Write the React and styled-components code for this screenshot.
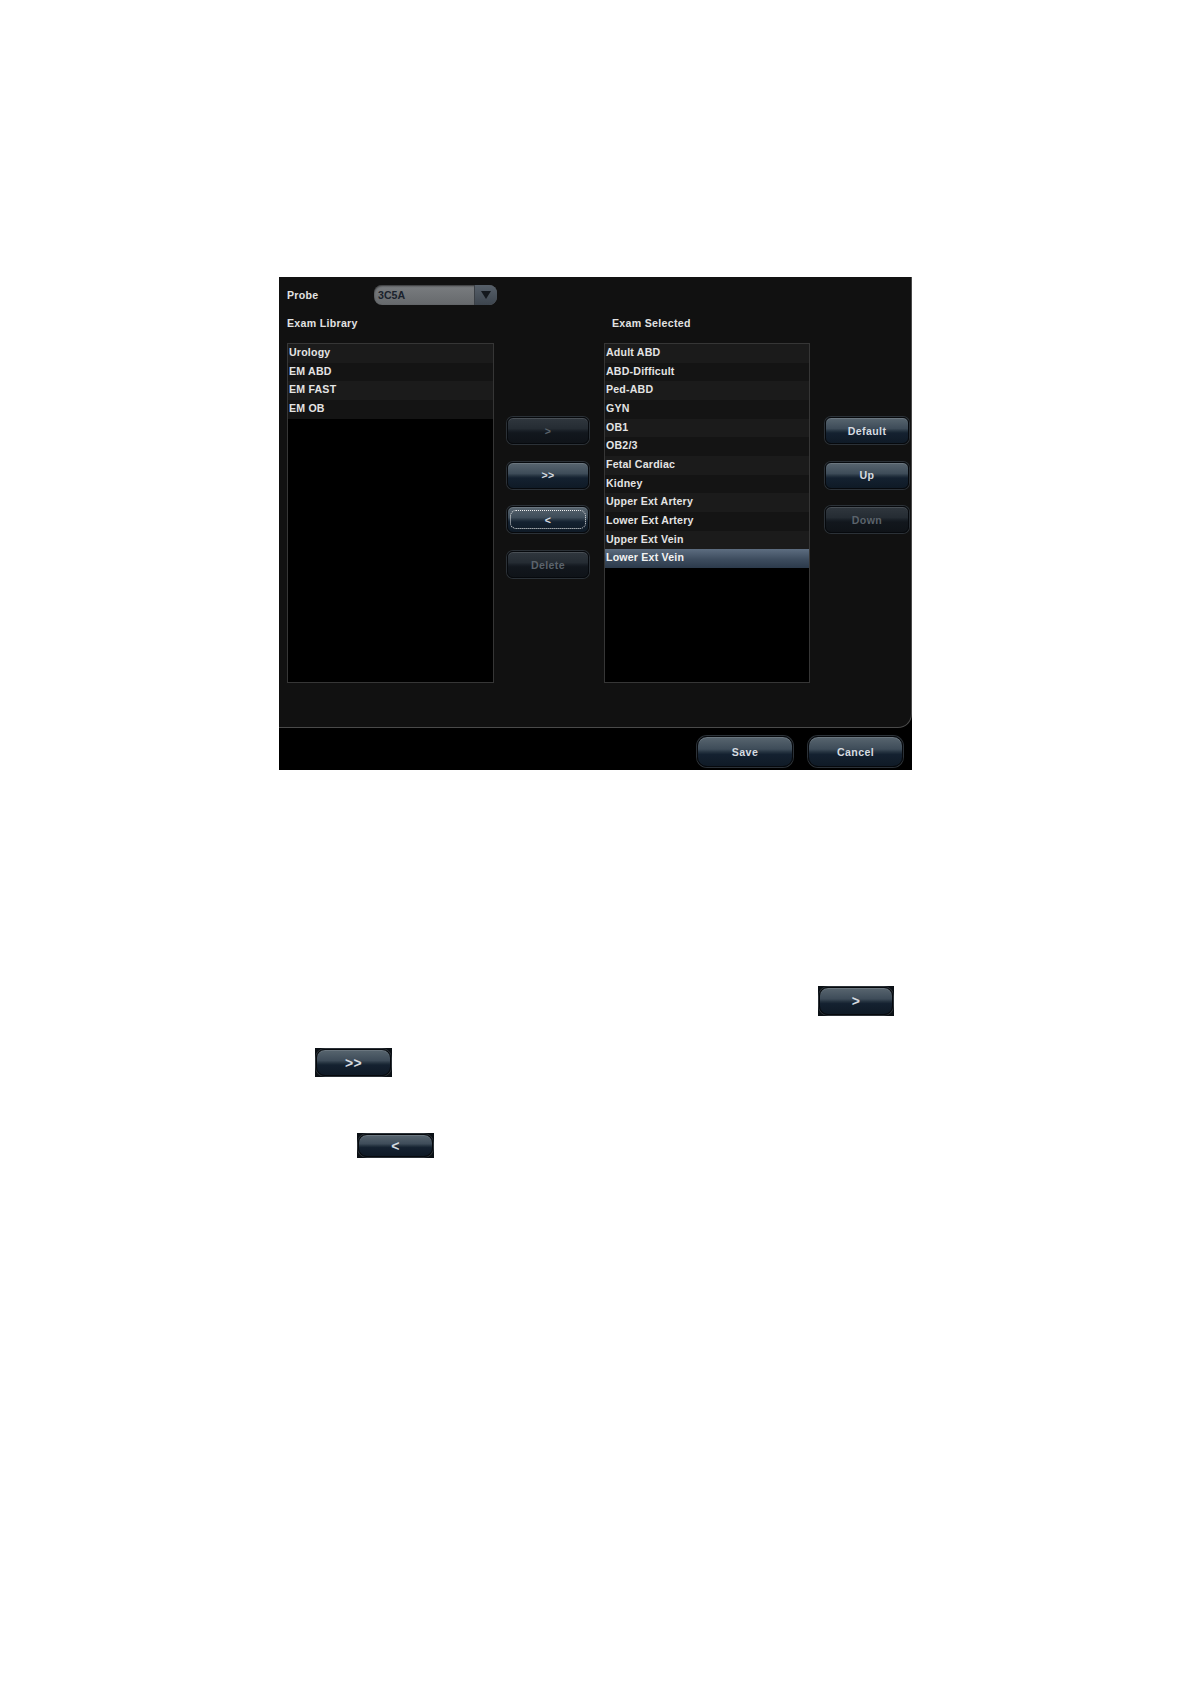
import React from 'react';
import styled, { createGlobalStyle, css } from 'styled-components';

const libraryExams = ['Urology', 'EM ABD', 'EM FAST', 'EM OB'];
const selectedExams = [
	'Adult ABD',
	'ABD-Difficult',
	'Ped-ABD',
	'GYN',
	'OB1',
	'OB2/3',
	'Fetal Cardiac',
	'Kidney',
	'Upper Ext Artery',
	'Lower Ext Artery',
	'Upper Ext Vein',
	'Lower Ext Vein',
];

const GlobalStyle = createGlobalStyle`
	body {
		margin: 0;
		background: #ffffff;
		font-family: "Liberation Sans", Arial, sans-serif;
	}
`;

const Page = styled.div`
	width: 1190px;
	min-height: 1684px;
	padding: 277px 0 0 279px;
	box-sizing: border-box;
`;

const Dialog = styled.div`
	width: 633px;
	background: #000;
	color: #e2e2e2;
	font-size: 10.6px;
	font-weight: bold;
`;

const Panel = styled.div`
	height: 451px;
	box-sizing: border-box;
	padding: 8px 0 0 8px;
	background: #111111;
	border-right: 1px solid #4a4a4a;
	border-bottom: 1px solid #4a4a4a;
	border-bottom-right-radius: 14px;
`;

const ProbeRow = styled.div`
	display: flex;
	align-items: center;
	height: 20px;
`;

const ProbeLabel = styled.span`
	width: 87px;
	letter-spacing: 0.3px;
`;

const Combo = styled.div`
	display: flex;
	width: 123px;
	height: 20px;
	border-radius: 8px;
	overflow: hidden;
	background: linear-gradient(#7a7d80, #66696c);
	box-shadow: inset 0 1px 2px rgba(0, 0, 0, 0.6);
`;

const ComboValue = styled.span`
	flex: 1;
	padding-left: 4px;
	line-height: 20px;
	color: #1a222c;
`;

const ComboArrow = styled.span`
	width: 22px;
	display: flex;
	align-items: center;
	justify-content: center;
	background: linear-gradient(#57606a, #3d454e);
	border-left: 1px solid #3a3f45;
`;

const Triangle = styled.span`
	width: 0;
	height: 0;
	border-left: 5px solid transparent;
	border-right: 5px solid transparent;
	border-top: 8px solid #15191e;
`;

const MainRow = styled.div`
	display: flex;
	align-items: flex-start;
	margin-top: 8px;
`;

const ListColumn = styled.div`
	width: ${(p) => p.$width}px;
	margin-left: ${(p) => p.$offset || 0}px;
`;

const ColumnLabel = styled.div`
	height: 20px;
	line-height: 20px;
	padding-left: ${(p) => p.$indent || 0}px;
	letter-spacing: 0.3px;
`;

const ListBox = styled.div`
	margin-top: 10px;
	height: 340px;
	box-sizing: border-box;
	border: 1px solid #363636;
	background: #000;
`;

const Row = styled.div`
	height: 18.67px;
	line-height: 17.6px;
	padding-left: 1px;
	background: ${(p) => (p.$odd ? '#141414' : '#1b1b1b')};
	color: #e4e4e4;
	letter-spacing: 0.2px;
	white-space: nowrap;
	${(p) =>
		p.$selected &&
		css`
			background: linear-gradient(#5d6d80, #3d4c5e 55%, #2c3a4b);
			color: #f2f2f2;
		`}
`;

const ButtonColumn = styled.div`
	display: flex;
	flex-direction: column;
	gap: 17.7px;
	width: ${(p) => p.$width}px;
	margin-left: ${(p) => p.$offset}px;
	padding-top: 104px;
`;

const enabledFace = css`
	background: linear-gradient(
		#58656f 0%,
		#3e4c59 42%,
		#24323f 52%,
		#142130 60%,
		#0f1a26 100%
	);
	color: #d6dbe0;
`;

const disabledFace = css`
	background: linear-gradient(
		#30373e 0%,
		#252c33 42%,
		#181e25 52%,
		#12171d 60%,
		#0f1318 100%
	);
	color: #5b636b;
`;

const Button = styled.div`
	position: relative;
	display: flex;
	align-items: center;
	justify-content: center;
	height: ${(p) => p.$height || 27}px;
	width: ${(p) => (p.$width ? `${p.$width}px` : 'auto')};
	box-sizing: border-box;
	border-radius: ${(p) => p.$radius || 6}px;
	border: 1px solid #06090d;
	box-shadow: 0 0 0 1px #2b3137, inset 0 1px 0 rgba(255, 255, 255, 0.12);
	font-family: "Liberation Sans", Arial, sans-serif;
	font-size: ${(p) => p.$size || 10.6}px;
	font-weight: bold;
	letter-spacing: 0.4px;
	${(p) => (p.$disabled ? disabledFace : enabledFace)}
`;

const FocusRing = styled.span`
	position: absolute;
	inset: 3px 2px;
	border: 1px dotted #f0f0f0;
	border-radius: 6px;
`;

const Footer = styled.div`
	display: flex;
	justify-content: flex-end;
	gap: 15px;
	height: 42px;
	box-sizing: border-box;
	padding: 8px 9px 0 0;
`;

const Para = styled.div`
	margin-top: ${(p) => p.$top}px;
	padding-left: ${(p) => p.$indent}px;
	height: ${(p) => p.$height}px;
`;

const Snapshot = styled.div`
	display: inline-flex;
	align-items: center;
	width: ${(p) => p.$width}px;
	height: ${(p) => p.$height}px;
	padding: 1px;
	box-sizing: border-box;
	background: #0b1015;
`;

const Inline = ({ width, height, label }) => (
	<Snapshot $width={width} $height={height}>
		<Button $height={height - 2} $width={width - 2} $radius={9} $size={14}>
			{label}
		</Button>
	</Snapshot>
);

const App = () => {
	return (
		<>
			<GlobalStyle />
			<Page>
				<Dialog>
					<Panel>
						<ProbeRow>
							<ProbeLabel>Probe</ProbeLabel>
							<Combo>
								<ComboValue>3C5A</ComboValue>
								<ComboArrow>
									<Triangle />
								</ComboArrow>
							</Combo>
						</ProbeRow>

						<MainRow>
							<ListColumn $width={207}>
								<ColumnLabel>Exam Library</ColumnLabel>
								<ListBox>
									{libraryExams.map((name, i) => (
										<Row key={name} $odd={i % 2 === 1}>
											{name}
										</Row>
									))}
								</ListBox>
							</ListColumn>

							<ButtonColumn $width={82} $offset={13}>
								<Button $disabled>&gt;</Button>
								<Button>&gt;&gt;</Button>
								<Button>
									&lt;
									<FocusRing />
								</Button>
								<Button $disabled>Delete</Button>
							</ButtonColumn>

							<ListColumn $width={206} $offset={15}>
								<ColumnLabel $indent={8}>Exam Selected</ColumnLabel>
								<ListBox>
									{selectedExams.map((name, i) => (
										<Row
											key={name}
											$odd={i % 2 === 1}
											$selected={i === selectedExams.length - 1}
										>
											{name}
										</Row>
									))}
								</ListBox>
							</ListColumn>

							<ButtonColumn $width={84} $offset={15}>
								<Button>Default</Button>
								<Button>Up</Button>
								<Button $disabled>Down</Button>
							</ButtonColumn>
						</MainRow>
					</Panel>

					<Footer>
						<Button $width={96} $height={31} $radius={10}>
							Save
						</Button>
						<Button $width={95} $height={31} $radius={10}>
							Cancel
						</Button>
					</Footer>
				</Dialog>

				<Para $top={216} $indent={539} $height={30}>
					<Inline width={76} height={30} label=">" />
				</Para>
				<Para $top={32} $indent={36} $height={29}>
					<Inline width={77} height={29} label=">>" />
				</Para>
				<Para $top={56} $indent={78} $height={25}>
					<Inline width={77} height={25} label="<" />
				</Para>
			</Page>
		</>
	);
};

export default App;
